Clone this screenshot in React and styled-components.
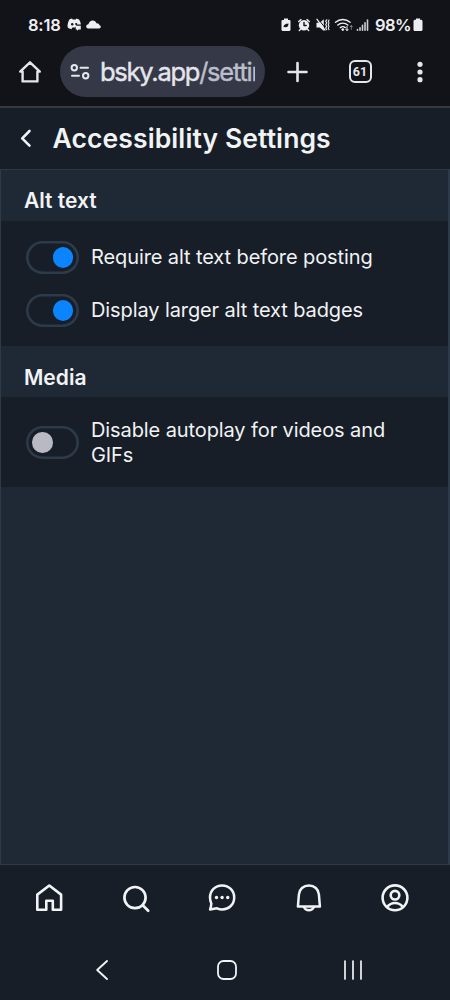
import React, { useState } from 'react';
import styled, { createGlobalStyle, ThemeProvider } from 'styled-components';

const theme = {
  colors: {
    browser: '#121318',
    pill: '#343847',
    browserIcon: '#e5e6ec',
    surface: '#171e27',
    panel: '#1e2935',
    border: '#2c3a4a',
    text: '#f1f3f5',
    primary: '#0a85ff',
    knobOff: '#b9b9c3',
  },
};

const GlobalStyle = createGlobalStyle`
  * {
    box-sizing: border-box;
  }

  body {
    margin: 0;
    background: #171e27;
    font-family: Inter, Roboto, sans-serif;
  }
`;

const Screen = styled.div`
  width: 450px;
  height: 1000px;
  display: flex;
  flex-direction: column;
  overflow: hidden;
  color: ${({ theme }) => theme.colors.text};
  background: ${({ theme }) => theme.colors.surface};
`;

const Icon = styled.svg`
  display: block;
  flex: none;
  fill: none;
  stroke: currentColor;
  stroke-width: ${({ $stroke }) => $stroke || 2};
  stroke-linecap: round;
  stroke-linejoin: round;

  .solid {
    fill: currentColor;
    stroke: none;
  }
`;

const StatusBar = styled.div`
  flex: none;
  height: 46px;
  padding: 3px 27px 0 28px;
  display: flex;
  align-items: center;
  justify-content: space-between;
  color: #eeeef2;
  background: ${({ theme }) => theme.colors.browser};
`;

const StatusGroup = styled.div`
  display: flex;
  align-items: center;
  gap: ${({ $gap }) => $gap || 0}px;
`;

const StatusText = styled.span`
  width: ${({ $width }) => $width}px;
  font-size: 16.5px;
  font-weight: 600;
  line-height: 20px;
  letter-spacing: ${({ $spacing }) => $spacing || 0}px;
  white-space: nowrap;
`;

const BrowserBar = styled.div`
  flex: none;
  height: 62px;
  padding-left: 18px;
  display: flex;
  align-items: flex-start;
  color: ${({ theme }) => theme.colors.browserIcon};
  background: ${({ theme }) => theme.colors.browser};
  border-bottom: 2px solid #353941;
`;

const BrowserButton = styled.button`
  width: ${({ $width }) => $width}px;
  height: 51px;
  padding: 0;
  display: flex;
  align-items: center;
  justify-content: center;
  color: inherit;
  background: none;
  border: 0;
`;

const AddressPill = styled.div`
  width: 205px;
  height: 51px;
  margin-left: 18px;
  padding: 0 10px;
  display: flex;
  align-items: center;
  gap: 10px;
  border-radius: 26px;
  background: ${({ theme }) => theme.colors.pill};
`;

const Address = styled.span`
  flex: 1;
  overflow: hidden;
  white-space: nowrap;
  font-size: 25.5px;
  line-height: 36px;
  letter-spacing: -1.25px;
  -webkit-text-stroke: 0.4px currentColor;

  span {
    color: #bcbfcb;
  }
`;

const TabCount = styled.span`
  width: 23px;
  height: 23px;
  display: flex;
  align-items: center;
  justify-content: center;
  border: 2px solid currentColor;
  border-radius: 6px;
  font-family: Roboto, sans-serif;
  font-size: 12.5px;
  font-weight: 700;
`;

const Header = styled.header`
  flex: none;
  height: 61px;
  padding-left: 20px;
  display: flex;
  align-items: center;
  gap: 20.5px;

  h1 {
    margin: 0 0 1px;
    font-size: 26.5px;
    font-weight: 600;
    line-height: 34px;
    letter-spacing: 0.1px;
  }
`;

const Content = styled.main`
  flex: none;
  height: 696px;
  border: 1px solid ${({ theme }) => theme.colors.border};
  border-right-width: 2px;
  background: ${({ theme }) => theme.colors.panel};
`;

const SectionTitle = styled.h2`
  height: 51px;
  margin: 0;
  padding: ${({ $top }) => $top}px 0 0 23px;
  font-size: 21px;
  font-weight: 600;
  line-height: 39px;
`;

const Group = styled.div`
  padding: ${({ $padding }) => $padding};
  display: flex;
  flex-direction: column;
  gap: 20px;
  background: ${({ theme }) => theme.colors.surface};
`;

const SettingRow = styled.div`
  display: flex;
  align-items: center;
  gap: 12px;
  font-size: 20px;
  line-height: 24.5px;
  letter-spacing: -0.1px;
`;

const Switch = styled.button`
  flex: none;
  width: 53px;
  height: 33px;
  padding: 0 6px;
  display: flex;
  align-items: center;
  justify-content: ${({ $on }) => ($on ? 'flex-end' : 'flex-start')};
  background: none;
  border: 0;
  border-radius: 17px;
  box-shadow: inset 0 0 0 2.6px ${({ theme }) => theme.colors.border};
`;

const Knob = styled.span`
  width: 20.5px;
  height: 20.5px;
  border-radius: 50%;
  background: ${({ theme, $on }) => ($on ? theme.colors.primary : theme.colors.knobOff)};
`;

const TabBar = styled.nav`
  flex: none;
  height: 66px;
  padding-left: 6px;
  display: grid;
  grid-template-columns: repeat(5, 86.5px);
  align-items: center;
  justify-items: center;
`;

const SystemBar = styled.div`
  flex: 1;
  padding: 9px 0 0 39px;
  display: grid;
  grid-template-columns: repeat(3, 125.5px);
  align-items: center;
  justify-items: center;
`;

const DiscordIcon = () => (
  <Icon width="15" height="13" viewBox="0 0 15 13">
    <path className="solid" d="M2.6 1.3 5 .6l.7 1h3l.8-1 2.5.8c1.2 1.7 1.8 3.3 1.8 5H9.5L8.6 9.4H5.4l-1 1.8C2.8 10.9 1.5 10.2.6 9.3.4 6.2 1.1 3.4 2.6 1.3Z" />
    <circle cx="5.2" cy="6.3" r="1.2" fill="#121318" stroke="none" />
    <circle cx="9.2" cy="6" r="1.1" fill="#121318" stroke="none" />
    <path className="solid" d="M8.8 7.8h5v3.8h-2.3L10 12.8v-1.2H8.8Z" />
  </Icon>
);

const CloudIcon = () => (
  <Icon width="15" height="9" viewBox="0 0 15 9">
    <path className="solid" d="M2.3 8.4C.8 8.4.2 7.3.2 6.4c0-1.3 1-2.1 2.2-2.2C3 1.8 4.7.4 6.7.4c1.9 0 3.2 1.1 3.8 2.8 1.7-.1 2.7.7 3 2 1 .3 1.3 1 1.3 1.6 0 1-.8 1.6-1.8 1.6Z" />
  </Icon>
);

const StatusIcons = () => (
  <Icon width="94" height="16" viewBox="0 0 94 16" $stroke="1.4">
    {/* power saving */}
    <path className="solid" d="M3 1.5h4V3h1.3c.7 0 1.2.5 1.2 1.2v8.6c0 .7-.5 1.2-1.2 1.2H1.7c-.7 0-1.2-.5-1.2-1.2V4.2C.5 3.5 1 3 1.7 3H3Z" />
    <path d="M2.7 10.3c-.5-2.2 1.6-3.6 4.8-3.8.1 2.7-1.5 4.3-3.6 3.5Z" fill="#121318" stroke="none" />
    {/* alarm */}
    <circle cx="23" cy="8.2" r="5.2" className="solid" />
    <path d="M17.7 4.5 20 2.6M28.3 4.5 26 2.6M19.3 12.6l-1 1M26.7 12.6l1 1" />
    <path d="M23 5.5v3h2.2" stroke="#121318" />
    {/* vibrate / muted */}
    <path className="solid" d="M35.5 5.7h3.3l4-3.5v11.8L38.8 10.600h-3.300Z" />
    <path d="M37.4 2.2l6.5 8.4" stroke="#121318" strokeWidth="1" />
    <path d="M36 2.3l8 10.8" strokeWidth="1.3" />
    <path d="M45.8 2.8l-1.1 1.4 1.1 1.7-1.1 1.8 1.1 1.7-1.1 1.7 1.1 1.6M48 3l-.7 1.3.7 1.6-.7 1.8.7 1.7-.7 1.7.7 1.6" strokeWidth="1.1" />
    {/* wifi */}
    <path d="M54.5 5.2c4.2-3.7 10.4-3.7 14.6 0M56.8 8c2.9-2.5 7.1-2.5 10 0M59.3 10.6c1.5-1.2 3.5-1.2 5 0" />
    <circle className="solid" cx="61.8" cy="12.6" r="1.3" />
    <path d="M66 9.5v4M64.8 12.3l1.2 1.3 1.2-1.3" strokeWidth="1" />
    <path d="M70.3 12.5V8.6M69.2 9.8l1.1-1.2 1.1 1.2" strokeWidth="1" opacity=".45" />
    {/* signal */}
    <path d="M76.5 12.5v.7M79 10.7v2.500M81.500 8.300v4.900M84 5.800v7.400M86.500 3v10.200" strokeWidth="1.6" opacity=".85" />
  </Icon>
);

const BatteryIcon = () => (
  <Icon width="10" height="14" viewBox="0 0 10 14">
    <path className="solid" d="M3 .4h4v1.3h.8c1 0 1.7.7 1.7 1.7v8c0 1-.7 1.7-1.7 1.7H2.2c-1 0-1.7-.7-1.7-1.7v-8c0-1 .7-1.7 1.7-1.7H3Z" />
  </Icon>
);

const ChromeHomeIcon = () => (
  <Icon width="24" height="24" viewBox="0 0 24 24" $stroke="2.4">
    <path d="M2.2 11.6 12 2.3l9.800 9.300H19.400v9.800H4.600v-9.800Z" />
  </Icon>
);

const TuneIcon = () => (
  <Icon width="20" height="18" viewBox="0 0 20 18" $stroke="2">
    <circle cx="4.3" cy="4.7" r="2.7" />
    <path d="M10.5 4.7H18M2 12.8h7" />
    <circle cx="15.7" cy="12.8" r="2.7" />
  </Icon>
);

const PlusIcon = () => (
  <Icon width="22" height="22" viewBox="0 0 22 22" $stroke="2.6">
    <path d="M11.5 2v18M2.5 11h18" />
  </Icon>
);

const MoreIcon = () => (
  <Icon width="8" height="24" viewBox="0 0 8 24">
    <circle className="solid" cx="4" cy="4.3" r="2.6" />
    <circle className="solid" cx="4" cy="12" r="2.6" />
    <circle className="solid" cx="4" cy="19.7" r="2.6" />
  </Icon>
);

const BackIcon = () => (
  <Icon width="12" height="20" viewBox="0 0 12 20" $stroke="2.6">
    <path d="M9.5 2 2.2 9.3l7.3 7.3" />
  </Icon>
);

const HomeIcon = () => (
  <Icon width="32" height="32" viewBox="0 0 32 32" $stroke="2.6">
    <path d="M4.3 12.6 16.3 3.5l11.8 9.1v15.2h-8.3v-9.1h-6.500v9.100h-9Z" />
  </Icon>
);

const SearchIcon = () => (
  <Icon width="32" height="32" viewBox="0 0 32 32" $stroke="2.7">
    <circle cx="15" cy="15.6" r="10.6" />
    <path d="m22.7 23.3 5.5 5.4" />
  </Icon>
);

const ChatIcon = () => (
  <Icon width="32" height="32" viewBox="0 0 32 32" $stroke="2.5">
    <path d="M16.1 3.5c7 0 12.1 5.200 12.100 12s-5.100 11.900-12.100 11.900c-1.900 0-3.400-.4-5-1.100-2.200.2-4.300.8-7 1.300.6-2.300 1.200-4.200 1.200-6.200-.9-2-1.300-3.700-1.300-5.900 0-6.800 5.100-12 12.100-12Z" />
    <circle className="solid" cx="10.5" cy="15.5" r="1.7" />
    <circle className="solid" cx="16.1" cy="15.5" r="1.7" />
    <circle className="solid" cx="21.7" cy="15.5" r="1.7" />
  </Icon>
);

const BellIcon = () => (
  <Icon width="32" height="32" viewBox="0 0 32 32" $stroke="2.5">
    <path d="M15.9 3.5c5.5 0 9.6 3.6 10 8.900l1 12.200H4.900l1-12.200c.4-5.300 4.500-8.900 10-8.900Z" />
    <path d="M10.9 25c1 2 2.8 3.2 5 3.2s4-1.2 5-3.2" />
  </Icon>
);

const ProfileIcon = () => (
  <Icon width="32" height="32" viewBox="0 0 32 32" $stroke="2.6">
    <circle cx="16" cy="15.8" r="12.4" />
    <circle cx="16" cy="13.2" r="4.3" />
    <path d="M8.2 25c2-2.700 4.700-4 7.800-4s5.800 1.300 7.800 4" />
  </Icon>
);

const tabs = [
  { name: 'Home', Glyph: HomeIcon },
  { name: 'Search', Glyph: SearchIcon },
  { name: 'Chat', Glyph: ChatIcon },
  { name: 'Notifications', Glyph: BellIcon },
  { name: 'Profile', Glyph: ProfileIcon },
];

const Setting = ({ label, initial }) => {
  const [on, setOn] = useState(initial);

  return (
    <SettingRow>
      <Switch $on={on} role="switch" aria-checked={on} aria-label={label} onClick={() => setOn(!on)}>
        <Knob $on={on} />
      </Switch>
      <span>{label}</span>
    </SettingRow>
  );
};

const App = () => {
  return (
    <ThemeProvider theme={theme}>
      <GlobalStyle />
      <Screen>
        <StatusBar>
          <StatusGroup $gap={4}>
            <StatusText $width={35} $spacing={-0.2}>8:18</StatusText>
            <DiscordIcon />
            <CloudIcon />
          </StatusGroup>
          <StatusGroup>
            <StatusIcons />
            <StatusText $width={38} $spacing={-0.5}>98%</StatusText>
            <BatteryIcon />
          </StatusGroup>
        </StatusBar>

        <BrowserBar>
          <BrowserButton $width={24} aria-label="Home page">
            <ChromeHomeIcon />
          </BrowserButton>
          <AddressPill>
            <TuneIcon />
            <Address>bsky.app<span>/settings</span></Address>
          </AddressPill>
          <BrowserButton $width={64} aria-label="New tab">
            <PlusIcon />
          </BrowserButton>
          <BrowserButton $width={62} aria-label="Tabs">
            <TabCount>61</TabCount>
          </BrowserButton>
          <BrowserButton $width={58} aria-label="More">
            <MoreIcon />
          </BrowserButton>
        </BrowserBar>

        <Header>
          <BackIcon />
          <h1>Accessibility Settings</h1>
        </Header>

        <Content>
          <SectionTitle $top={11}>Alt text</SectionTitle>
          <Group $padding="20px 25px 19px">
            <Setting label="Require alt text before posting" initial />
            <Setting label="Display larger alt text badges" initial />
          </Group>
          <SectionTitle $top={12}>Media</SectionTitle>
          <Group $padding="21px 40px 20px 25px">
            <Setting label="Disable autoplay for videos and GIFs" initial={false} />
          </Group>
        </Content>

        <TabBar>
          {tabs.map(({ name, Glyph }) => (
            <Glyph key={name} />
          ))}
        </TabBar>

        <SystemBar>
          <Icon width="14" height="22" viewBox="0 0 14 22" $stroke="1.9">
            <path d="M12 2 2.2 11 12 20" />
          </Icon>
          <Icon width="22" height="22" viewBox="0 0 22 22" $stroke="1.8">
            <rect x="2" y="2" width="18" height="18" rx="5.5" />
          </Icon>
          <Icon width="20" height="22" viewBox="0 0 20 22" $stroke="1.7">
            <path d="M2 2v18M10 2v18M18 2v18" />
          </Icon>
        </SystemBar>
      </Screen>
    </ThemeProvider>
  );
};

export default App;
